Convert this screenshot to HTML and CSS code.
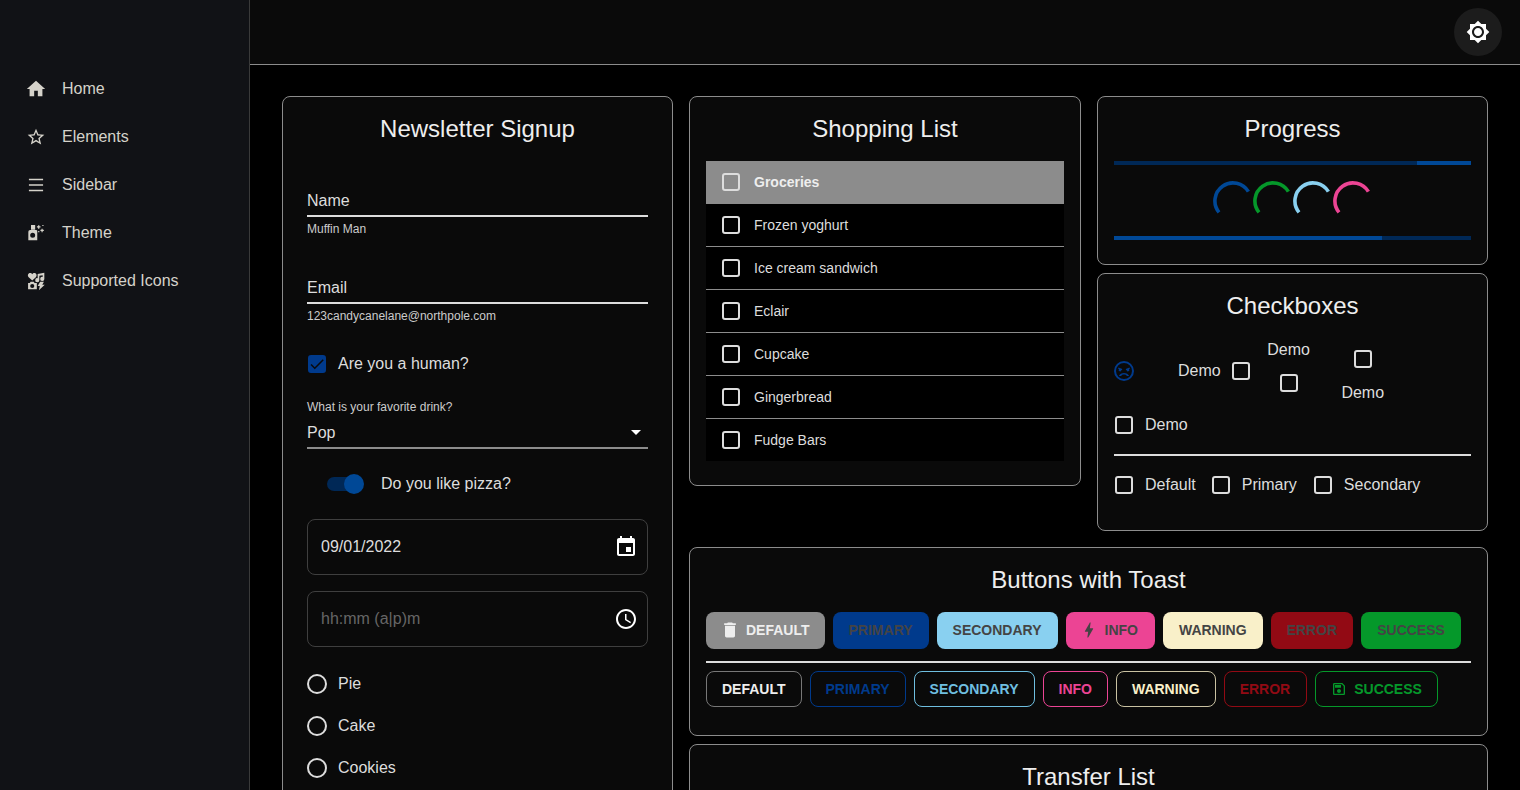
FILE: index.html
```html
<!DOCTYPE html>
<html lang="en">
<head>
    <meta charset="UTF-8">
    <meta name="viewport" content="width=device-width, initial-scale=1.0">
    <title>Elements</title>
    <link rel="stylesheet" href="styles.css">
</head>
<body>
    <aside class="sidebar">
        <nav class="nav">
            <a class="nav-item"><svg class="nav-icon home-icon" viewBox="0 0 24 24"><path d="M10 20v-6h4v6h5v-8h3L12 3 2 12h3v8z"/></svg>Home</a>
            <a class="nav-item"><svg class="nav-icon" viewBox="0 0 24 24"><path d="M22 9.240l-7.190-.62L12 2 9.190 8.630 2 9.240l5.460 4.730L5.820 21 12 17.270 18.180 21l-1.630-7.030L22 9.240zM12 15.400l-3.760 2.270 1-4.280-3.320-2.880 4.380-.38L12 6.100l1.710 4.040 4.380.38-3.320 2.880 1 4.280L12 15.400z"/></svg>Elements</a>
            <a class="nav-item"><svg class="nav-icon" viewBox="0 0 24 24"><path d="M3.500 4.400h17v2h-17zm0 6.600h17v2h-17zm0 6.600h17v2h-17z"/></svg>Sidebar</a>
            <a class="nav-item"><svg class="nav-icon" viewBox="0 0 24 24"><path fill-rule="evenodd" d="M6 2.400h5V8H6zM5 8.400h7a1.500 1.500 0 0 1 1.500 1.500v10.900H2.800V10.600A2.200 2.200 0 0 1 5 8.400zm3 3.400a3 3 0 1 0 0 6 3 3 0 0 0 0-6zM14.500 2.600h1.500v1.400h1.400v1.500H16v1.400h-1.500V5.500h-1.400V4h1.400zM19.600 2.400H21v1.200h-1.400zM18.600 6.800h1.400v1.300h1.400v1.500H20v1.400h-1.400V9.600h-1.300V8.100h1.300zM14.600 9.600H16V11h-1.400z"/></svg>Theme</a>
            <a class="nav-item"><svg class="nav-icon" viewBox="0 0 24 24"><path fill-rule="evenodd" d="M7.500 11.500L3.200 7.500C1.500 5.800 2.300 2.500 5 2.500c1.100 0 1.900.6 2.500 1.400.6-.8 1.400-1.400 2.500-1.400 2.700 0 3.500 3.300 1.800 5zM14 3.500l8-1.500v7.500a2.500 2.500 0 1 1-2-2.400V5l-4 .8v5.200a2.500 2.500 0 1 1-2-2.400zM5.500 13h3.800l1 1.500h2.700V22H2.500v-7.500h2zM7.500 15.500a2.500 2.500 0 1 0 0 5 2.500 2.500 0 0 0 0-5zM17 13h4.500l-2 3.500h3L15.500 23l1-5H14z"/></svg>Supported Icons</a>
        </nav>
    </aside>

    <div class="content">
        <header class="topbar">
            <button class="theme-btn"><svg viewBox="0 0 24 24"><path d="M20 8.690V4h-4.690L12 .69 8.690 4H4v4.690L.69 12 4 15.310V20h4.690L12 23.310 15.310 20H20v-4.690L23.310 12 20 8.690zM12 18c-3.310 0-6-2.690-6-6s2.690-6 6-6 6 2.690 6 6-2.690 6-6 6zm0-10c-2.210 0-4 1.790-4 4s1.790 4 4 4 4-1.790 4-4-1.790-4-4-4z"/></svg></button>
        </header>

        <main class="main">
            <section class="card signup">
                <h2 class="card-title">Newsletter Signup</h2>

                <div class="field first-field">
                    <div class="field-value">Name</div>
                    <div class="helper">Muffin Man</div>
                </div>
                <div class="field second-field">
                    <div class="field-value">Email</div>
                    <div class="helper">123candycanelane@northpole.com</div>
                </div>

                <label class="check human"><span class="box box-on"><svg viewBox="0 0 24 24"><path d="M9 16.170L4.830 12l-1.420 1.410L9 19 21 7l-1.410-1.410z"/></svg></span>Are you a human?</label>

                <div class="drink-label">What is your favorite drink?</div>
                <div class="select">Pop<span class="arrow"></span></div>

                <div class="switch-row">
                    <span class="switch"><span class="switch-thumb"></span></span>
                    Do you like pizza?
                </div>

                <div class="outlined date-box">09/01/2022
                    <svg viewBox="0 0 24 24"><path d="M17 12h-5v5h5v-5zM16 1v2H8V1H6v2H5c-1.110 0-1.990.9-1.990 2L3 19c0 1.100.89 2 2 2h14c1.100 0 2-.9 2-2V5c0-1.100-.9-2-2-2h-1V1h-2zm3 18H5V8h14v11z"/></svg>
                </div>
                <div class="outlined time-box"><span class="placeholder">hh:mm (a|p)m</span>
                    <svg viewBox="0 0 24 24"><path d="M11.990 2C6.470 2 2 6.480 2 12s4.470 10 9.990 10C17.520 22 22 17.520 22 12S17.520 2 11.990 2zM12 20c-4.420 0-8-3.580-8-8s3.580-8 8-8 8 3.580 8 8-3.580 8-8 8zm.5-13H11v6l5.250 3.150.75-1.230-4.500-2.670z"/></svg>
                </div>

                <div class="radios">
                    <label class="radio"><span class="dot"></span>Pie</label>
                    <label class="radio"><span class="dot"></span>Cake</label>
                    <label class="radio"><span class="dot"></span>Cookies</label>
                </div>
            </section>

            <div class="right">
                <div class="top-row">
                    <section class="card shopping">
                        <h2 class="card-title">Shopping List</h2>
                        <ul class="list">
                            <li class="list-item list-head"><span class="box"></span>Groceries</li>
                            <li class="list-item"><span class="box"></span>Frozen yoghurt</li>
                            <li class="list-item"><span class="box"></span>Ice cream sandwich</li>
                            <li class="list-item"><span class="box"></span>Eclair</li>
                            <li class="list-item"><span class="box"></span>Cupcake</li>
                            <li class="list-item"><span class="box"></span>Gingerbread</li>
                            <li class="list-item"><span class="box"></span>Fudge Bars</li>
                        </ul>
                    </section>

                    <div class="stack">
                        <section class="card progress">
                            <h2 class="card-title">Progress</h2>
                            <div class="bar"><span class="bar-fill bar-end"></span></div>
                            <div class="spinners">
                                <svg class="spinner" viewBox="0 0 40 40"><path class="sp-primary" d="M6 31.300A18 18 0 1 1 35.400 10.700"/></svg>
                                <svg class="spinner" viewBox="0 0 40 40"><path class="sp-success" d="M6 31.300A18 18 0 1 1 35.400 10.700"/></svg>
                                <svg class="spinner" viewBox="0 0 40 40"><path class="sp-secondary" d="M6 31.300A18 18 0 1 1 35.400 10.700"/></svg>
                                <svg class="spinner" viewBox="0 0 40 40"><path class="sp-info" d="M6 31.300A18 18 0 1 1 35.400 10.700"/></svg>
                            </div>
                            <div class="bar bar-low"><span class="bar-fill bar-start"></span></div>
                        </section>

                        <section class="card checkboxes">
                            <h2 class="card-title">Checkboxes</h2>
                            <div class="demo-row">
                                <svg class="angry" viewBox="0 0 24 24"><path fill-rule="evenodd" d="M12 2a10 10 0 1 0 0 20 10 10 0 0 0 0-20zm0 18a8 8 0 1 1 0-16 8 8 0 0 1 0 16zM6.500 8.600l3.800 1.400-.4 1.200-.6-.2a1.300 1.300 0 1 1-2.300-.8l-.9-.4zm11 0l.4 1.200-.9.4a1.300 1.300 0 1 1-2.300.8l-.6.2-.4-1.200zM12 14c-2.300 0-4.300 1.300-5.100 3h2.200c.7-.9 1.700-1.400 2.900-1.400s2.200.5 2.900 1.400h2.200c-.8-1.700-2.800-3-5.100-3z"/></svg>
                                <label class="demo demo-start">Demo<span class="box"></span></label>
                                <label class="demo demo-top">Demo<span class="box"></span></label>
                                <label class="demo demo-bottom"><span class="box"></span>Demo</label>
                            </div>
                            <label class="check demo-end"><span class="box"></span>Demo</label>
                            <hr class="rule">
                            <div class="color-row">
                                <label class="check"><span class="box"></span>Default</label>
                                <label class="check"><span class="box"></span>Primary</label>
                                <label class="check"><span class="box"></span>Secondary</label>
                            </div>
                        </section>
                    </div>
                </div>

                <section class="card buttons">
                    <h2 class="card-title">Buttons with Toast</h2>
                    <div class="btn-row">
                        <button class="btn solid s-default"><svg viewBox="0 0 24 24"><path d="M6 19c0 1.100.9 2 2 2h8c1.100 0 2-.9 2-2V7H6v12zM19 4h-3.500l-1-1h-5l-1 1H5v2h14V4z"/></svg>Default</button>
                        <button class="btn solid s-primary">Primary</button>
                        <button class="btn solid s-secondary">Secondary</button>
                        <button class="btn solid s-info"><svg viewBox="0 0 24 24"><path d="M11 21h-1l1-7H7.500c-.58 0-.57-.32-.38-.66.19-.34.05-.08.07-.12C8.480 10.940 10.420 7.540 13 3h1l-1 7h3.500c.49 0 .56.33.47.51l-.07.15C12.960 17.550 11 21 11 21z"/></svg>Info</button>
                        <button class="btn solid s-warning">Warning</button>
                        <button class="btn solid s-error">Error</button>
                        <button class="btn solid s-success">Success</button>
                    </div>
                    <hr class="rule btn-rule">
                    <div class="btn-row">
                        <button class="btn line l-default">Default</button>
                        <button class="btn line l-primary">Primary</button>
                        <button class="btn line l-secondary">Secondary</button>
                        <button class="btn line l-info">Info</button>
                        <button class="btn line l-warning">Warning</button>
                        <button class="btn line l-error">Error</button>
                        <button class="btn line l-success"><svg viewBox="0 0 24 24"><path d="M17 3H5c-1.110 0-2 .9-2 2v14c0 1.100.89 2 2 2h14c1.100 0 2-.9 2-2V7l-4-4zm2 16H5V5h11.170L19 7.830V19zm-7-7c-1.660 0-3 1.340-3 3s1.340 3 3 3 3-1.340 3-3-1.340-3-3-3zM6 6h9v4H6z"/></svg>Success</button>
                    </div>
                </section>

                <section class="card transfer">
                    <h2 class="card-title">Transfer List</h2>
                </section>
            </div>
        </main>
    </div>
</body>
</html>
```

FILE: styles.css
```css
* {
    box-sizing: border-box;
}
html, body {
    height: 100%;
}
body {
    margin: 0;
    display: flex;
    overflow: hidden;
    background-color: #000;
    color: #ddd;
    font-family: "Liberation Sans", Arial, sans-serif;
    font-size: 16px;
    line-height: 1.5;
}

/* sidebar */
.sidebar {
    width: 250px;
    flex-shrink: 0;
    background-color: #111216;
    border-right: 1px solid #3a3a3a;
    padding-top: 65px;
}
.nav-item {
    display: flex;
    align-items: center;
    height: 48px;
    padding-left: 26px;
    color: #d5d2ca;
}
.nav-icon {
    width: 20px;
    height: 20px;
    margin-right: 16px;
    fill: #d5d2ca;
}
.home-icon {
    width: 22px;
    height: 22px;
    margin-left: -1px;
    margin-right: 15px;
}

/* top */
.content {
    flex: 1;
    min-width: 0;
}
.topbar {
    height: 65px;
    display: flex;
    justify-content: flex-end;
    align-items: center;
    background-color: #0a0a0a;
    border-bottom: 1px solid #8c8c8c;
    padding-right: 18px;
}
.theme-btn {
    width: 48px;
    height: 48px;
    margin-top: -1px;
    border: none;
    border-radius: 50%;
    background-color: #1c1c1c;
    display: flex;
    align-items: center;
    justify-content: center;
    padding: 0;
}
.theme-btn svg {
    width: 24px;
    height: 24px;
    fill: #fff;
}

.main {
    display: flex;
    gap: 16px;
    padding: 31px 32px 0;
    align-items: flex-start;
}
.card {
    background-color: #0a0a0a;
    border: 1px solid #8c8c8c;
    border-radius: 8px;
    padding: 16px;
}
.card-title {
    margin: 0;
    font-size: 24px;
    font-weight: 400;
    line-height: 32px;
    text-align: center;
    color: #eee;
}

/* newsletter */
.signup {
    width: 391px;
    flex-shrink: 0;
    padding: 16px 24px;
    height: 760px;
}
.field-value {
    height: 32px;
    line-height: 32px;
    border-bottom: 2px solid #ddd;
}
.first-field {
    margin-top: 40px;
}
.second-field {
    margin-top: 36px;
}
.helper {
    font-size: 12px;
    line-height: 14px;
    margin-top: 5px;
    color: #ccc;
}
.check {
    display: flex;
    align-items: center;
}
.box {
    width: 18px;
    height: 18px;
    flex-shrink: 0;
    border: 2px solid #ddd;
    border-radius: 3px;
    display: inline-block;
}
.box-on {
    background-color: #003a8c;
    border-color: #003a8c;
}
.box-on svg {
    display: block;
    width: 18px;
    height: 18px;
    margin: -2px;
    fill: #0a0a0a;
}
.human {
    margin-top: 29px;
    padding-left: 1px;
    height: 24px;
}
.human .box {
    margin-right: 12px;
}
.drink-label {
    font-size: 12px;
    line-height: 14px;
    margin-top: 24px;
    color: #ccc;
}
.select {
    position: relative;
    height: 32px;
    line-height: 32px;
    margin-top: 3px;
    border-bottom: 2px solid #8c8c8c;
}
.arrow {
    position: absolute;
    right: 7px;
    top: 13px;
    border-left: 5px solid transparent;
    border-right: 5px solid transparent;
    border-top: 5px solid #fff;
}
.switch-row {
    display: flex;
    align-items: center;
    height: 24px;
    margin-top: 23px;
    padding-left: 20px;
}
.switch {
    position: relative;
    width: 34px;
    height: 14px;
    border-radius: 7px;
    background-color: #002856;
    margin-right: 20px;
}
.switch-thumb {
    position: absolute;
    right: -3px;
    top: -3px;
    width: 20px;
    height: 20px;
    border-radius: 50%;
    background-color: #004896;
}
.outlined {
    display: flex;
    align-items: center;
    justify-content: space-between;
    height: 56px;
    border: 1px solid #3f3f3f;
    border-radius: 8px;
    padding: 0 9px 0 13px;
}
.outlined svg {
    width: 24px;
    height: 24px;
    fill: #fff;
}
.date-box {
    margin-top: 23px;
}
.time-box {
    margin-top: 16px;
}
.placeholder {
    color: #666;
}
.radios {
    margin-top: 16px;
}
.radio {
    display: flex;
    align-items: center;
    height: 42px;
}
.dot {
    width: 20px;
    height: 20px;
    border: 2px solid #ddd;
    border-radius: 50%;
    margin-right: 11px;
}

/* right side */
.right {
    flex: 1;
    min-width: 0;
    display: flex;
    flex-direction: column;
    gap: 8px;
}
.top-row {
    display: flex;
    gap: 16px;
    align-items: flex-start;
    margin-bottom: 8px;
}
.shopping {
    width: 392px;
    flex-shrink: 0;
    height: 390px;
}
.list {
    list-style: none;
    margin: 16px 0 0;
    padding: 0;
    background-color: #000;
}
.list-item {
    display: flex;
    align-items: center;
    height: 43px;
    padding-left: 16px;
    font-size: 14px;
    border-bottom: 1px solid #8c8c8c;
}
.list-item:last-child {
    height: 42px;
    border-bottom: none;
}
.list-item .box {
    margin-right: 14px;
}
.list-head {
    background-color: #8c8c8c;
    color: #eee;
    font-weight: bold;
    border-bottom: none;
    padding-bottom: 1px;
}
.stack {
    flex: 1;
    min-width: 0;
    display: flex;
    flex-direction: column;
    gap: 8px;
}
.progress {
    height: 169px;
}
.bar {
    display: flex;
    height: 4px;
    margin-top: 16px;
    background-color: #002856;
}
.bar-low {
    margin-top: 15px;
}
.bar-fill {
    display: block;
    height: 4px;
    background-color: #004896;
}
.bar-end {
    width: 54px;
    margin-left: auto;
}
.bar-start {
    width: 268px;
}
.spinners {
    display: flex;
    justify-content: center;
    height: 40px;
    margin-top: 16px;
}
.spinner {
    width: 40px;
    height: 40px;
    fill: none;
    stroke-width: 3.600;
}
.sp-primary { stroke: #004896; }
.sp-success { stroke: #05982a; }
.sp-secondary { stroke: #89d0f0; }
.sp-info { stroke: #ec4494; }

.checkboxes {
    height: 258px;
}
.demo-row {
    display: flex;
    align-items: center;
    height: 66px;
    margin-top: 16px;
}
.angry {
    width: 24px;
    height: 24px;
    margin-left: -2px;
    fill: #003a8c;
}
.demo {
    display: flex;
    align-items: center;
}
.demo-start {
    margin-left: 42px;
    gap: 11px;
}
.demo-top {
    flex-direction: column;
    gap: 12px;
    margin-left: 17.500px;
    margin-top: -12px;
}
.demo-bottom {
    flex-direction: column;
    gap: 13px;
    margin-left: 31.500px;
    margin-top: 13px;
}
.check .box {
    margin-right: 12px;
}
.demo-end {
    margin-top: 9px;
    padding-left: 1px;
    height: 24px;
}
.rule {
    border: none;
    border-top: 2px solid #ddd;
    margin: 17px 0 0;
}
.color-row {
    display: flex;
    gap: 16px;
    margin-top: 17px;
    padding-left: 1px;
}
.color-row .check {
    height: 24px;
}
.color-row .check:last-child {
    margin-left: 1px;
}

/* buttons */
.buttons {
    height: 189px;
}
.btn-row {
    display: flex;
    gap: 8px;
}
.buttons .card-title {
    margin-bottom: 16px;
}
.btn {
    display: flex;
    align-items: center;
    font-family: inherit;
    font-size: 14px;
    font-weight: bold;
    text-transform: uppercase;
    border-radius: 8px;
    background: none;
}
.btn svg {
    fill: currentColor;
}
.solid {
    height: 37px;
    border: none;
    color: #444;
    padding: 0 16px 1px;
}
.solid svg {
    width: 20px;
    height: 20px;
    margin: 0 6px 0 -2px;
}
.s-default { background-color: #8c8c8c; color: #eee; padding-right: 15px; }
.s-primary { background-color: #003a8c; }
.s-secondary { background-color: #89d0f0; }
.s-info { background-color: #ec4494; padding-right: 17px; }
.s-info svg { margin-left: -3px; }
.s-warning { background-color: #f9f0c9; }
.s-error { background-color: #920a14; }
.s-success { background-color: #05982a; }
.line {
    height: 36px;
    border: 1px solid;
    padding: 0 15px;
}
.line svg {
    width: 16px;
    height: 16px;
    margin-right: 7px;
}
.l-default { color: #eee; border-color: #777; }
.l-primary { color: #003a8c; border-color: #003a8c; }
.l-secondary { color: #6fbfe0; border-color: #6fbfe0; }
.l-info { color: #ec4494; border-color: #ec4494; }
.l-warning { color: #f9f0c9; border-color: #c9c2a2; }
.l-error { color: #920a14; border-color: #920a14; padding-right: 16px; }
.l-success { color: #05982a; border-color: #05982a; }
.btn-rule {
    margin: 12px 0 8px;
}
.transfer {
    height: 200px;
}
```
